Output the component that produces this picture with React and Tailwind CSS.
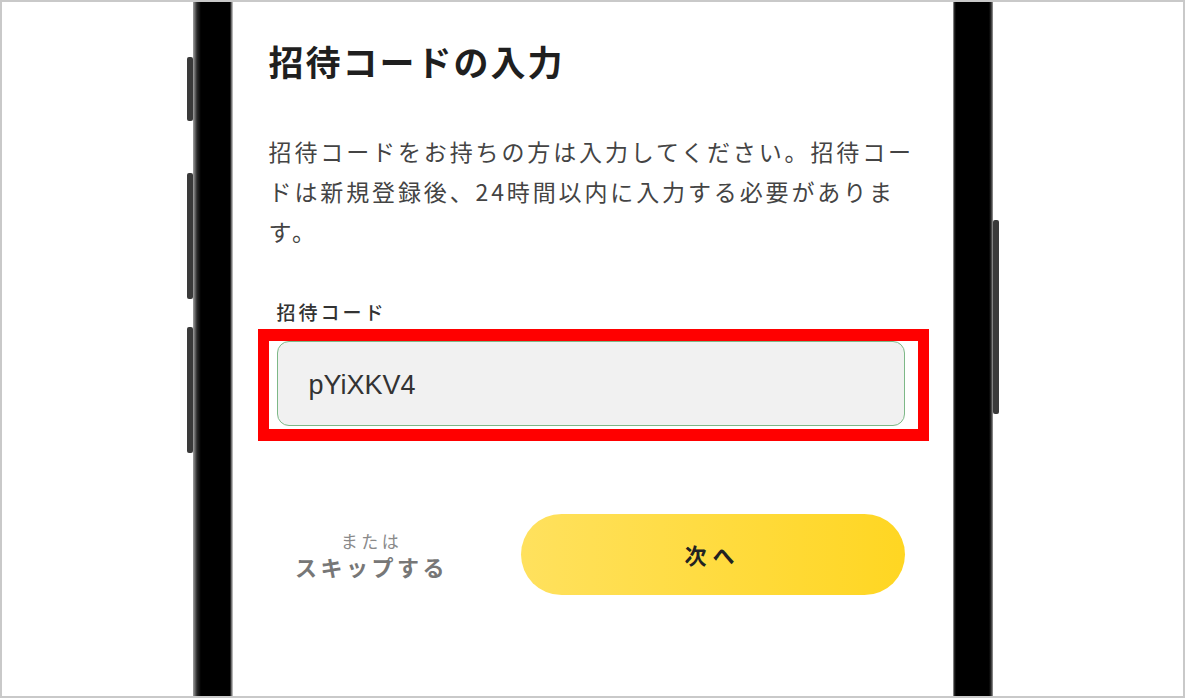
import React from 'react';

const jp = { fontFamily: '"Noto Sans CJK JP", "Noto Sans", sans-serif' };

function SideButton({ className }) {
    return <div className={`absolute w-[6px] rounded-[2px] bg-[#3a3a3a] ${className}`} />;
}

export default function App() {
    return (
        <div className="w-[1185px] h-[698px] border-2 border-[#c9c9c9] bg-white overflow-hidden flex justify-center" style={jp}>
            {/* Phone */}
            <div className="relative flex h-full">
                <SideButton className="-left-[6px] top-[55px] h-[64px]" />
                <SideButton className="-left-[6px] top-[171px] h-[126px]" />
                <SideButton className="-left-[6px] top-[325px] h-[126px]" />
                <SideButton className="-right-[6px] top-[218px] h-[194px]" />

                {/* left bezel */}
                <div className="w-[40px] h-full bg-[linear-gradient(to_right,#a0a0a0_0px,#2a2a2a_4px,#000_8px,#000_37px,#9a9a9a_39px,#d0d0d0_40px)]" />

                {/* Screen */}
                <div className="w-[720px] h-full bg-white pt-[35px] px-[36px]">
                    <h1 className="text-[35px] leading-[48px] font-bold tracking-[2px] text-[#1f1f1f]">招待コードの入力</h1>

                    <p className="mt-[46px] text-[23px] leading-[40px] tracking-[0.125em] text-[#444]">
                        <span className="block whitespace-nowrap">招待コードをお持ちの方は入力してください。招待コー</span>
                        <span className="block whitespace-nowrap">ドは新規登録後、24時間以内に入力する必要がありま</span>
                        <span className="block whitespace-nowrap">す。</span>
                    </p>

                    {/* Form */}
                    <div className="mt-[49px] pl-[8px] pr-[12px]">
                        <label className="block text-[19px] leading-[24px] font-medium tracking-[3px] text-[#333]">招待コード</label>
                        <div className="relative mt-[17px]">
                            <div className="h-[85px] rounded-[12px] border border-[#7db887] bg-[#f1f1f1] flex items-center pl-[31px] pt-[3px]">
                                <span className="text-[27px] text-[#333]" style={{ fontFamily: '"Liberation Sans", Arial, sans-serif' }}>pYiXKV4</span>
                            </div>
                            {/* highlight */}
                            <div className="absolute -left-[19px] -top-[12px] -right-[24px] -bottom-[15px] border-x-[11px] border-y-[12px] border-[#ff0000]" />
                        </div>

                        {/* Actions */}
                        <div className="mt-[88px] flex items-center">
                            <div className="w-[190px] flex flex-col items-center">
                                <span className="text-[17px] leading-[18px] tracking-[3.5px] text-[#8a8a8a]">または</span>
                                <span className="mt-[4px] text-[22px] leading-[24px] font-bold tracking-[3.5px] text-[#777]">スキップする</span>
                            </div>
                            <button className="ml-auto w-[384px] h-[81px] rounded-full bg-[linear-gradient(to_right,#ffe15e,#ffd622)] text-[22px] font-bold tracking-[6px] text-[#222]">
                                次へ
                            </button>
                        </div>
                    </div>
                </div>

                {/* right bezel */}
                <div className="w-[40px] h-full bg-[linear-gradient(to_right,#c8c8c8_0px,#333_1px,#000_3px,#000_36px,#2a2a2a_38px,#a0a0a0_40px)]" />
            </div>
        </div>
    );
}
